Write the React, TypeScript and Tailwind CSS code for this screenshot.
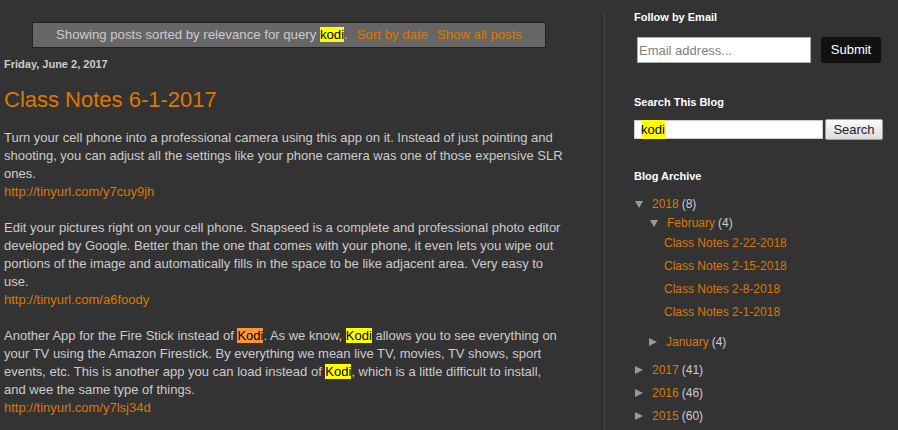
import React from 'react';

const FONT = { fontFamily: '"Liberation Sans", Arial, sans-serif' };

const Hl = ({ children, active = false }: { children: React.ReactNode; active?: boolean }) => (
  <span className={`${active ? 'bg-[#ff9632]' : 'bg-[#ffff00]'} text-black`}>{children}</span>
);

const Down = () => (
  <svg width="8" height="7" viewBox="0 0 8 7" className="shrink-0">
    <polygon points="0,0 8,0 4,7" fill="#999999" />
  </svg>
);

const Right = () => (
  <svg width="8" height="8" viewBox="0 0 8 8" className="shrink-0">
    <polygon points="0,0 8,4 0,8" fill="#999999" />
  </svg>
);

const posts = ['Class Notes 2-22-2018', 'Class Notes 2-15-2018', 'Class Notes 2-8-2018', 'Class Notes 2-1-2018'];

// collapsed years below the open 2018 branch
const years = [
  { year: '2017', count: 41, mt: 'mt-[10px]' },
  { year: '2016', count: 46, mt: 'mt-[5px]' },
  { year: '2015', count: 60, mt: 'mt-[5px]' },
];

function MainColumn() {
  return (
    <div className="w-[604px] shrink-0 pl-[4px] pr-[30px] pt-[22px]">
      <div className="mx-[28px] h-[26px] border border-[#222222] bg-[#666666] flex items-center justify-center text-[13.2px] text-[#cccccc] whitespace-nowrap">
        <span>
          Showing posts sorted by relevance for query <Hl>kodi</Hl>.
        </span>
        <a className="ml-[9px] text-[#dd7700]">Sort by date</a>
        <a className="ml-[9px] text-[#dd7700]">Show all posts</a>
      </div>

      <div className="mt-[9px] text-[11px] leading-[14px] font-bold text-[#cccccc]">Friday, June 2, 2017</div>

      <h3 className="mt-[16px] text-[22px] leading-[26px] text-[#dd7700]">Class Notes 6-1-2017</h3>

      <div className="mt-[16px] w-[561px] text-[13px] leading-[18px] text-[#cccccc]">
        Turn your cell phone into a professional camera using this app on it. Instead of just pointing and shooting, you
        can adjust all the settings like your phone camera was one of those expensive SLR ones.
        <br />
        <a className="text-[#dd7700]">http://tinyurl.com/y7cuy9jh</a>
        <br />
        <br />
        Edit your pictures right on your cell phone. Snapseed is a complete and professional photo editor developed by
        Google. Better than the one that comes with your phone, it even lets you wipe out portions of the image and
        automatically fills in the space to be like adjacent area. Very easy to use.
        <br />
        <a className="text-[#dd7700]">http://tinyurl.com/a6foody</a>
        <br />
        <br />
        Another App for the Fire Stick instead of <Hl active>Kodi</Hl>. As we know, <Hl>Kodi</Hl> allows you to see
        everything on your TV using the Amazon Firestick. By everything we mean live TV, movies, TV shows, sport events,
        etc. This is another app you can load instead of <Hl>Kodi</Hl>, which is a little difficult to install, and wee
        the same type of things.
        <br />
        <a className="text-[#dd7700]">http://tinyurl.com/y7lsj34d</a>
      </div>
    </div>
  );
}

function Sidebar() {
  return (
    <div className="flex-1 mt-[11px] border-l border-[#444444] pl-[29px]">
      <h2 className="text-[11px] leading-[12px] font-bold text-white">Follow by Email</h2>
      <div className="mt-[14px] flex items-start">
        <input
          className="ml-[3px] w-[174px] h-[26px] bg-white border border-[#a9a9a9] px-[1px] text-[13px] text-black placeholder:text-[#808080] outline-none"
          placeholder="Email address..."
        />
        <button className="ml-[10px] w-[60px] h-[26px] rounded-[3px] bg-[#111111] text-white text-[13px]">Submit</button>
      </div>

      <h2 className="mt-[32px] text-[11px] leading-[14px] font-bold text-white">Search This Blog</h2>
      <div className="mt-[10px] h-[21px] flex items-center">
        <div className="w-[189px] h-[19px] bg-white border border-[#cccccc] pl-[6px] flex items-center text-[13px] text-black">
          <Hl>kodi</Hl>
        </div>
        <button className="ml-[2px] w-[58px] h-[21px] rounded-[2px] border border-[#a0a0a0] bg-gradient-to-b from-[#fafafa] to-[#dcdcdc] text-[13px] text-[#222222]">
          Search
        </button>
      </div>

      <h2 className="mt-[29px] text-[11px] leading-[14px] font-bold text-white">Blog Archive</h2>
      <div className="text-[12px] leading-[18px]">
        <div className="mt-[12px] flex items-center">
          <span className="ml-[1px]">
            <Down />
          </span>
          <span className="ml-[9px] text-[#dd7700]">2018</span>
          <span className="ml-[3px] text-[#cccccc]">(8)</span>
        </div>
        <div className="mt-[1px] pl-[16px] flex items-center">
          <Down />
          <span className="ml-[9px] text-[#dd7700]">February</span>
          <span className="ml-[3px] text-[#cccccc]">(4)</span>
        </div>
        <div className="pl-[30px]">
          {posts.map((p, i) => (
            <div key={p} className={`${i === 0 ? 'mt-[2px]' : 'mt-[5px]'} text-[#dd7700]`}>
              {p}
            </div>
          ))}
        </div>
        <div className="mt-[12px] pl-[15px] flex items-center">
          <Right />
          <span className="ml-[9px] text-[#dd7700]">January</span>
          <span className="ml-[3px] text-[#cccccc]">(4)</span>
        </div>
        {years.map((y) => (
          <div key={y.year} className={`${y.mt} flex items-center`}>
            <span className="ml-[1px]">
              <Right />
            </span>
            <span className="ml-[9px] text-[#dd7700]">{y.year}</span>
            <span className="ml-[3px] text-[#cccccc]">({y.count})</span>
          </div>
        ))}
      </div>
    </div>
  );
}

export default function App() {
  return (
    <div className="w-[898px] h-[430px] overflow-hidden bg-[#333333] flex" style={FONT}>
      <MainColumn />
      <Sidebar />
    </div>
  );
}
